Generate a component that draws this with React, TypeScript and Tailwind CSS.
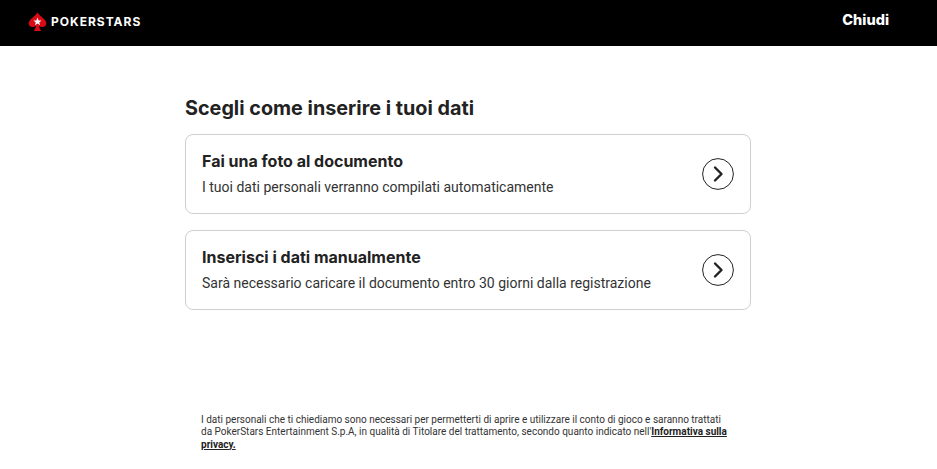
import React from 'react';

const options = [
  { title: 'Fai una foto al documento', text: 'I tuoi dati personali verranno compilati automaticamente' },
  { title: 'Inserisci i dati manualmente', text: 'Sarà necessario caricare il documento entro 30 giorni dalla registrazione' },
];

const Spade: React.FC = () => (
  <svg width="19" height="20" viewBox="0 0 19 20" className="shrink-0">
    <path
      d="M9.5 0.5C11 3 14 5 16.5 7.5C18.6 9.6 18.9 12.4 17.3 14C15.7 15.6 12.8 15.4 11 13.8C11.2 15.6 12 17.4 13.2 19H5.8C7 17.4 7.8 15.6 8 13.8C6.2 15.4 3.3 15.6 1.7 14C0.1 12.4 0.4 9.6 2.5 7.5C5 5 8 3 9.5 0.5Z"
      fill="#d70a16"
    />
    <path d="M9.5 5.6L10.6 8.5H13.6L11.2 10.4L12.1 13.3L9.5 11.6L6.9 13.3L7.8 10.4L5.4 8.5H8.4Z" fill="#fff" />
  </svg>
);

const App: React.FC = () => {
  return (
    <div className="h-[469px] w-[937px] overflow-hidden bg-white flex flex-col font-['Roboto',sans-serif] text-[#222]">
      <header className="h-[46px] bg-black flex items-center justify-between pl-[28px] pr-[48px] shrink-0">
        <div className="flex items-center gap-[4px] -mt-[3px]">
          <Spade />
          <span className="font-['Inter',sans-serif] font-bold text-[12px] tracking-[1px] text-white">POKERSTARS</span>
        </div>
        <button className="font-['Inter',sans-serif] font-extrabold text-[14.5px] text-white -mt-[7px]">Chiudi</button>
      </header>

      <main className="w-[566px] ml-[185px] flex flex-col flex-1">
        <h1 className="font-['Inter',sans-serif] font-bold text-[19.8px] leading-[24px] mt-[50px] mb-[14px] text-[#222]">
          Scegli come inserire i tuoi dati
        </h1>

        <div className="flex flex-col gap-4">
          {options.map((o) => (
            <div key={o.title} className="h-[80px] border border-[#cfcfcf] rounded-[8px] flex items-center justify-between pl-4 pr-4">
              <div className="-mt-[2px]">
                <div className="font-['Inter',sans-serif] font-bold text-[16px] leading-[20px] mb-[7px]">{o.title}</div>
                <div className="text-[14px] leading-[18px] text-[#333]">{o.text}</div>
              </div>
              <svg width="32" height="32" viewBox="0 0 32 32" fill="none" className="shrink-0">
                <circle cx="16" cy="16" r="15.4" stroke="#222" strokeWidth="1" />
                <path d="M13 9.5L19.5 16L13 22.5" stroke="#222" strokeWidth="2.4" strokeLinecap="round" strokeLinejoin="round" />
              </svg>
            </div>
          ))}
        </div>

        <p className="mt-auto mb-[18px] pl-4 pr-[21px] text-[10px] leading-[12.5px] text-[#333]">
          I dati personali che ti chiediamo sono necessari per permetterti di aprire e utilizzare il conto di gioco e saranno trattati da PokerStars Entertainment S.p.A, in qualità di Titolare del trattamento, secondo quanto indicato nell'
          <a className="font-bold underline text-[#222]">Informativa sulla privacy.</a>
        </p>
      </main>
    </div>
  );
};

export default App;
